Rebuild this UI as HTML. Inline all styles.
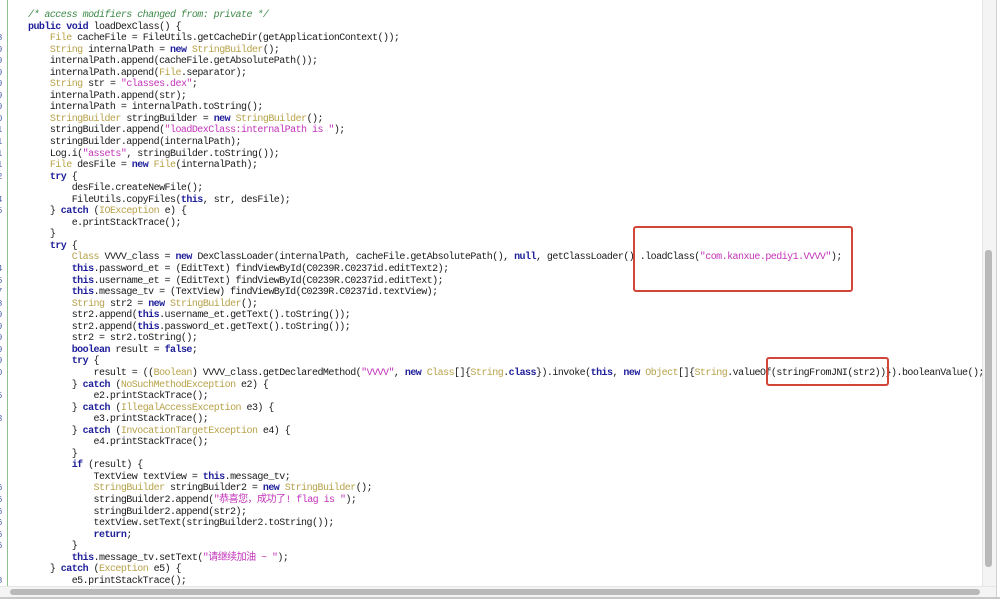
<!DOCTYPE html>
<html><head><meta charset="utf-8"><style>
html,body{margin:0;padding:0;background:#fff;width:1000px;height:599px;overflow:hidden;position:relative}
pre{position:absolute;left:28px;top:10px;margin:0;font-family:"Liberation Mono","Noto Sans CJK SC",monospace;font-size:10px;letter-spacing:-0.54px;line-height:11.55px;color:#1a1a1a;white-space:pre}
.k{color:#1e1e9a;font-weight:bold}
.t{color:#b8a24a}
.s{color:#c233b8}
.c{color:#3f8a4a;font-style:italic}
.g{position:absolute;left:-3px;top:10px;font-family:"Liberation Mono",monospace;font-size:9px;line-height:11.55px;color:#5566aa;white-space:pre}
.box{position:absolute;border:2px solid #d2463a;border-radius:3px}
</style></head><body>
<div class="g">
 
8
9
9
9
9
9
9
0
1
1
1
1
2
 
4
5
 
 
 
 
4
5
7
8
9
9
9
9
9
0
 
5
 
3
 
 
 
 
 
6
6
6
6
6
6
 
 
8
 
8</div>
<div style="position:absolute;left:7px;top:0;width:1px;height:586px;background:#8fc08f"></div>
<pre><span class="c">/* access modifiers changed from: private */</span>
<span class="k">public void</span> loadDexClass() {
    <span class="t">File</span> cacheFile = FileUtils.getCacheDir(getApplicationContext());
    <span class="t">String</span> internalPath = <span class="k">new</span> <span class="t">StringBuilder</span>();
    internalPath.append(cacheFile.getAbsolutePath());
    internalPath.append(<span class="t">File</span>.separator);
    <span class="t">String</span> str = <span class="s">"classes.dex"</span>;
    internalPath.append(str);
    internalPath = internalPath.toString();
    <span class="t">StringBuilder</span> stringBuilder = <span class="k">new</span> <span class="t">StringBuilder</span>();
    stringBuilder.append(<span class="s">"loadDexClass:internalPath is "</span>);
    stringBuilder.append(internalPath);
    Log.i(<span class="s">"assets"</span>, stringBuilder.toString());
    <span class="t">File</span> desFile = <span class="k">new</span> <span class="t">File</span>(internalPath);
    <span class="k">try</span> {
        desFile.createNewFile();
        FileUtils.copyFiles(<span class="k">this</span>, str, desFile);
    } <span class="k">catch</span> (<span class="t">IOException</span> e) {
        e.printStackTrace();
    }
    <span class="k">try</span> {
        <span class="t">Class</span> VVVV_class = <span class="k">new</span> DexClassLoader(internalPath, cacheFile.getAbsolutePath(), <span class="k">null</span>, getClassLoader() .loadClass(<span class="s">"com.kanxue.pediy1.VVVV"</span>);
        <span class="k">this</span>.password_et = (EditText) findViewById(C0239R.C0237id.editText2);
        <span class="k">this</span>.username_et = (EditText) findViewById(C0239R.C0237id.editText);
        <span class="k">this</span>.message_tv = (TextView) findViewById(C0239R.C0237id.textView);
        <span class="t">String</span> str2 = <span class="k">new</span> <span class="t">StringBuilder</span>();
        str2.append(<span class="k">this</span>.username_et.getText().toString());
        str2.append(<span class="k">this</span>.password_et.getText().toString());
        str2 = str2.toString();
        <span class="k">boolean</span> result = <span class="k">false</span>;
        <span class="k">try</span> {
            result = ((<span class="t">Boolean</span>) VVVV_class.getDeclaredMethod(<span class="s">"VVVV"</span>, <span class="k">new</span> <span class="t">Class</span>[]{<span class="t">String</span>.<span class="k">class</span>}).invoke(<span class="k">this</span>, <span class="k">new</span> <span class="t">Object</span>[]{<span class="t">String</span>.valueOf(stringFromJNI(str2))}).booleanValue();
        } <span class="k">catch</span> (<span class="t">NoSuchMethodException</span> e2) {
            e2.printStackTrace();
        } <span class="k">catch</span> (<span class="t">IllegalAccessException</span> e3) {
            e3.printStackTrace();
        } <span class="k">catch</span> (<span class="t">InvocationTargetException</span> e4) {
            e4.printStackTrace();
        }
        <span class="k">if</span> (result) {
            TextView textView = <span class="k">this</span>.message_tv;
            <span class="t">StringBuilder</span> stringBuilder2 = <span class="k">new</span> <span class="t">StringBuilder</span>();
            stringBuilder2.append(<span class="s">"恭喜您，成功了! flag is "</span>);
            stringBuilder2.append(str2);
            textView.setText(stringBuilder2.toString());
            <span class="k">return</span>;
        }
        <span class="k">this</span>.message_tv.setText(<span class="s">"请继续加油 ~ "</span>);
    } <span class="k">catch</span> (<span class="t">Exception</span> e5) {
        e5.printStackTrace();</pre>
<div class="box" style="left:633px;top:226px;width:216px;height:62px"></div>
<div class="box" style="left:766px;top:357px;width:119px;height:25px"></div>
<div style="position:absolute;left:982px;top:0;width:13px;height:588px;background:#f4f4f4;border-left:1px solid #e6e6e6"></div>
<div style="position:absolute;left:985px;top:250px;width:7px;height:317px;background:#b9b9b9;border-radius:3px"></div>
<div style="position:absolute;left:996px;top:0;width:1px;height:599px;background:#d0d0d0"></div>
<div style="position:absolute;left:0;top:586px;width:996px;height:11px;background:#f4f4f4;border-top:1px solid #e6e6e6"></div>
<div style="position:absolute;left:10px;top:589px;width:970px;height:6px;background:#b9b9b9;border-radius:3px"></div>
<div style="position:absolute;left:0;top:597px;width:1000px;height:2px;background:#c8c8c8"></div>
</body></html>
